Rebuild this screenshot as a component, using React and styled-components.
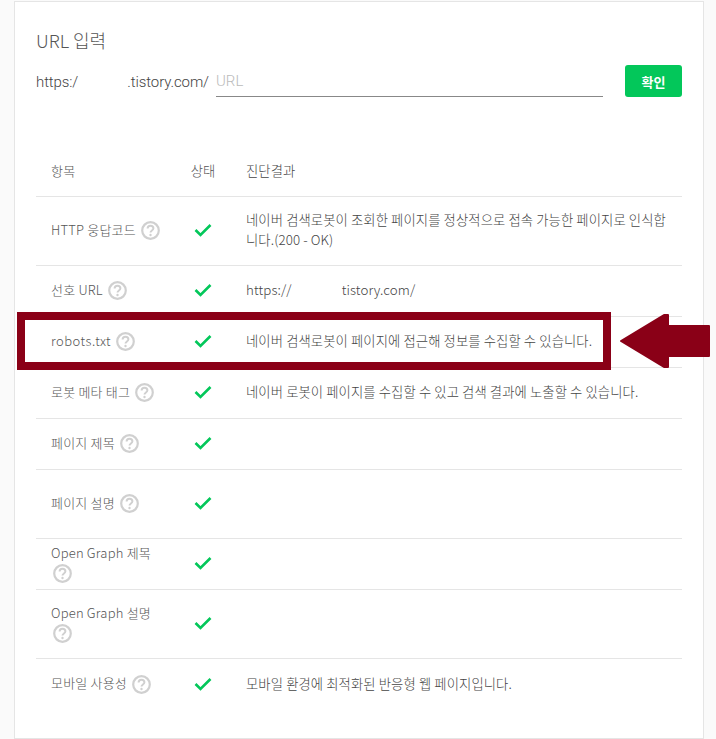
import styled, { createGlobalStyle } from "styled-components";

const GlobalStyle = createGlobalStyle`
  html, body {
    margin: 0;
    padding: 0;
    background: #fafafa;
  }
  body {
    font-family: "Noto Sans CJK KR", "Noto Sans", sans-serif;
    font-weight: 300;
    color: #444;
    overflow: hidden;
  }
`;

const Page = styled.div`
  height: 739px;
  padding: 1px 12px 0 14px;
  box-sizing: border-box;
`;

const Card = styled.div`
  position: relative;
  height: 738px;
  box-sizing: border-box;
  background: #fff;
  border: 1px solid #e5e5e5;
  padding: 0 21px;
`;

const Title = styled.h2`
  margin: 0;
  padding-top: 24px;
  height: 38px;
  font-size: 18px;
  line-height: 28px;
  font-weight: 300;
  color: #555;
`;

const UrlForm = styled.div`
  display: flex;
  align-items: flex-end;
  height: 33px;
`;

const UrlPrefix = styled.span`
  display: flex;
  align-self: center;
  width: 173px;
  margin-top: 2px;
  font-family: Roboto, "Noto Sans CJK KR", sans-serif;
  font-size: 15px;
  letter-spacing: -0.1px;
  color: #444;
`;

const Hidden = styled.span`
  display: inline-block;
  width: ${(p) => p.$width}px;
`;

const UrlInput = styled.div`
  flex: 1;
  margin-left: 7px;
  height: 32px;
  line-height: 34px;
  border-bottom: 1px solid #888;
  font-family: Roboto, "Noto Sans CJK KR", sans-serif;
  font-size: 15px;
  color: #bbb;
`;

const ConfirmButton = styled.button`
  width: 57px;
  height: 32px;
  margin-left: 22px;
  border: 0;
  border-radius: 3px;
  background: #03c75a;
  color: #fff;
  font-family: inherit;
  font-size: 13px;
  font-weight: 700;
`;

const Table = styled.div`
  margin-top: 50px;
`;

const Row = styled.div`
  display: grid;
  grid-template-columns: 149px 36px 1fr;
  align-items: center;
  height: ${(p) => p.$height}px;
  padding-bottom: 2px;
  box-sizing: border-box;
  border-bottom: ${(p) => (p.$last ? "0" : "1px solid #e5e5e5")};
`;

const ItemCell = styled.div`
  padding-left: 15px;
  padding-right: 15px;
  font-size: 13px;
  line-height: 20px;
  letter-spacing: 0.2px;
  color: #555;
`;

const ItemName = styled.span`
  letter-spacing: ${(p) => p.$spacing || 0.2}px;
`;

const StatusCell = styled.div`
  display: flex;
  justify-content: center;
  font-size: 13.33px;
  color: #555;
`;

const ResultCell = styled.div`
  padding-left: 25px;
  padding-right: 15px;
  font-size: 13.33px;
  line-height: 20px;
  letter-spacing: 0.1px;
  color: #444;
`;

const HelpSvg = styled.svg`
  display: inline-block;
  width: 19px;
  height: 19px;
  margin-left: 2px;
  vertical-align: middle;
`;

const Annotation = styled.div`
  position: absolute;
  left: 2px;
  top: 310px;
  width: 594px;
  height: 58px;
  box-sizing: border-box;
  border: 8px solid #8a0017;
`;

const Arrow = styled.svg`
  position: absolute;
  left: 604px;
  top: 310px;
  width: 92px;
  height: 58px;
`;

function HelpIcon() {
  return (
    <HelpSvg viewBox="0 0 19 19" fill="none">
      <circle cx="9.5" cy="9.5" r="8.3" stroke="#d0d0d0" strokeWidth="2.2" />
      <path
        d="M6.6 7.6c0-1.7 1.3-2.8 2.9-2.8s2.9 1 2.9 2.5c0 2.2-2.9 2.2-2.9 4.3"
        stroke="#d0d0d0"
        strokeWidth="2"
      />
      <circle cx="9.5" cy="14" r="1.2" fill="#d0d0d0" />
    </HelpSvg>
  );
}

function CheckIcon() {
  return (
    <svg width="18" height="14" viewBox="0 0 18 14" fill="none">
      <path d="M1.5 7l5 5L16.5 2" stroke="#03c75a" strokeWidth="2.6" />
    </svg>
  );
}

const rows = [
  { name: "HTTP 웅답코드", height: 69, result: "네이버 검색로봇이 조회한 페이지를 정상적으로 접속 가능한 페이지로 인식합니다.(200 - OK)" },
  { name: "선호 URL", height: 51, result: <>https://<Hidden $width={50} />tistory.com/</> },
  { name: "robots.txt", height: 51, spacing: 0.5, result: "네이버 검색로봇이 페이지에 접근해 정보를 수집할 수 있습니다." },
  { name: "로봇 메타 태그", height: 51, result: "네이버 로봇이 페이지를 수집할 수 있고 검색 결과에 노출할 수 있습니다." },
  { name: "페이지 제목", height: 51 },
  { name: "페이지 설명", height: 69 },
  { name: "Open Graph 제목", height: 51 },
  { name: "Open Graph 설명", height: 69 },
  { name: "모바일 사용성", height: 51, result: "모바일 환경에 최적화된 반응형 웹 페이지입니다.", last: true },
];

export default function App() {
  return (
    <>
      <GlobalStyle />
      <Page>
        <Card>
          <Title>URL 입력</Title>
          <UrlForm>
            <UrlPrefix>
              https:/<Hidden $width={52} />.tistory.com/
            </UrlPrefix>
            <UrlInput>URL</UrlInput>
            <ConfirmButton>확인</ConfirmButton>
          </UrlForm>
          <Table>
            <Row $height={50}>
              <ItemCell>항목</ItemCell>
              <StatusCell>상태</StatusCell>
              <ResultCell>진단결과</ResultCell>
            </Row>
            {rows.map((row) => (
              <Row key={row.name} $height={row.height} $last={row.last}>
                <ItemCell>
                  <ItemName $spacing={row.spacing}>{row.name}</ItemName> <HelpIcon />
                </ItemCell>
                <StatusCell>
                  <CheckIcon />
                </StatusCell>
                <ResultCell>{row.result}</ResultCell>
              </Row>
            ))}
          </Table>
          <Annotation />
          <Arrow viewBox="0 0 92 58">
            <path
              d="M2 29L45 3L49 3L49 14L90 14L90 44L49 44L49 55L45 55Z"
              fill="#8a0017"
              stroke="#8a0017"
              strokeWidth="2"
              strokeLinejoin="round"
            />
          </Arrow>
        </Card>
      </Page>
    </>
  );
}
